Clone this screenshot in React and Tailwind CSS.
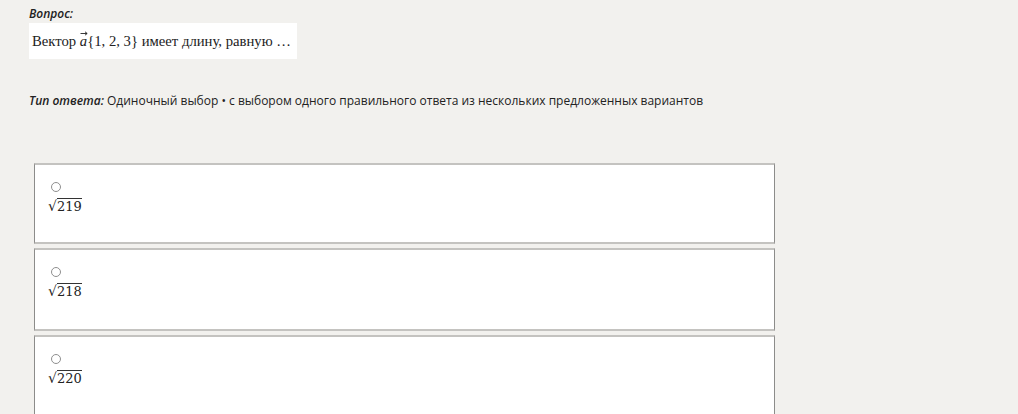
import { Fragment } from "react";

const options = [
  { value: "219", h: "h-[81px]" },
  { value: "218", h: "h-[83px]" },
  { value: "220", h: "h-[90px]" },
];

function Sqrt({ value }) {
  return (
    <span className="inline-flex items-end font-['DejaVu_Serif','Liberation_Serif',serif] text-[13px] leading-none text-[#222]">
      <span className="text-[14px]">√</span>
      <span className="border-t border-[#333] pt-[1px]">{value}</span>
    </span>
  );
}

function Option({ value, h }) {
  return (
    <div
      className={`flex flex-col items-start border-x border-y-2 border-x-[#8c8c8a] border-y-[#c4c3c0] bg-white pl-[13px] pt-[17px] ${h}`}
    >
      <span className="ml-[3px] h-[10px] w-[10px] rounded-full border border-[#8f8f8f] bg-white" />
      <div className="mt-[1px]">
        <Sqrt value={value} />
      </div>
    </div>
  );
}

export default function App() {
  return (
    <div className="h-[414px] w-[1018px] overflow-hidden bg-[#f2f1ee] font-['Open_Sans',sans-serif] text-[#222]">
      <div className="px-[29px] pt-[6px]">
        <div className="text-[12px] font-semibold italic leading-[16px]">Вопрос:</div>
        <div className="mt-[1px] inline-block bg-white py-[8px] pl-[3px] pr-[6px] font-['Liberation_Serif',serif] text-[14.7px] leading-[20px]">
          Вектор{" "}
          <span className="relative italic">
            a
            <svg className="absolute -top-[2px] left-[0px]" width="8" height="5" viewBox="0 0 8 5">
              <path d="M0.5 2.5H7M5 0.8L7.2 2.5L5 4.2" fill="none" stroke="#222" strokeWidth="0.9" />
            </svg>
          </span>
          {"{1, 2, 3} имеет длину, равную …"}
        </div>
        <div className="mt-[33px] text-[12px] leading-[18px]">
          <span className="font-semibold italic">Тип ответа:</span> Одиночный выбор • с выбором одного правильного ответа из нескольких предложенных вариантов
        </div>
      </div>
      <div className="ml-[34px] mt-[53px] flex w-[741px] flex-col gap-[4px]">
        {options.map((o) => (
          <Fragment key={o.value}>
            <Option value={o.value} h={o.h} />
          </Fragment>
        ))}
      </div>
    </div>
  );
}
